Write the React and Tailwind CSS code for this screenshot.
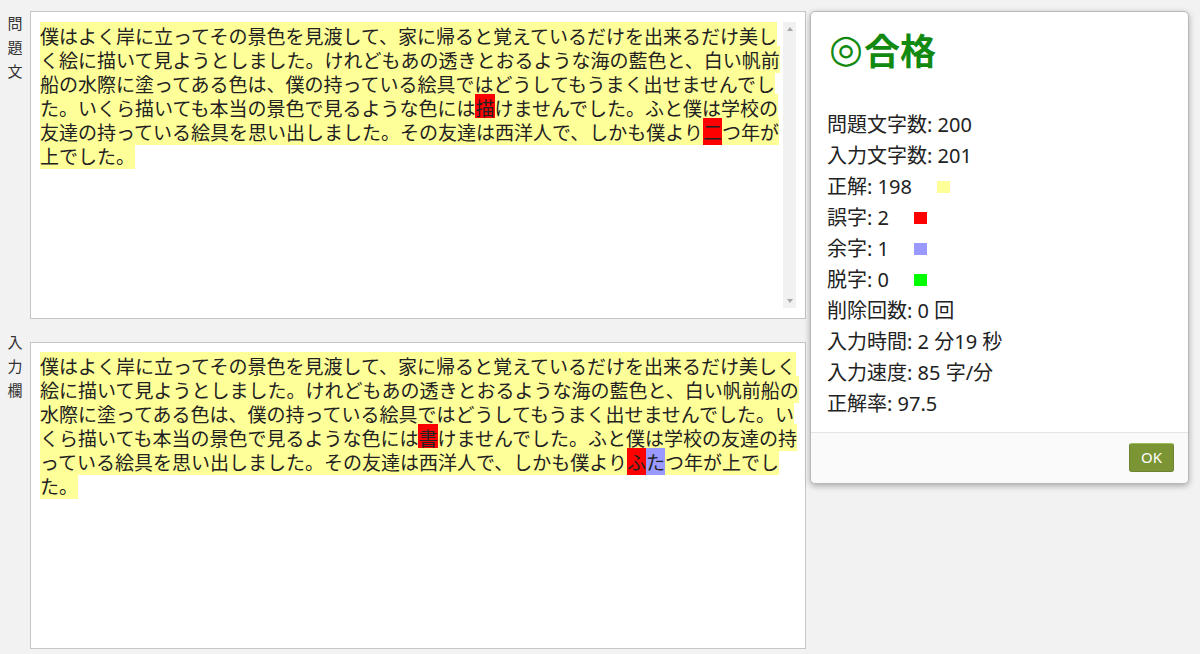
import React from 'react';

const jp = { fontFamily: '"Noto Sans CJK JP", sans-serif' };
const ui = { fontFamily: '"Noto Sans", "Noto Sans CJK JP", sans-serif' };
const mark = { fontFamily: '"DejaVu Sans", "Noto Sans CJK JP", sans-serif' };

// one line = list of segments; a plain string is a correct char run
const questionLines = [
  ['僕はよく岸に立ってその景色を見渡して、家に帰ると覚えているだけを出来るだけ美し'],
  ['く絵に描いて見ようとしました。けれどもあの透きとおるような海の藍色と、白い帆前'],
  ['船の水際に塗ってある色は、僕の持っている絵具ではどうしてもうまく出せませんでし'],
  ['た。いくら描いても本当の景色で見るような色には', { t: '描', k: 'miss' }, 'けませんでした。ふと僕は学校の'],
  ['友達の持っている絵具を思い出しました。その友達は西洋人で、しかも僕より', { t: '二', k: 'miss' }, 'つ年が'],
  ['上でした。'],
];

const inputLines = [
  ['僕はよく岸に立ってその景色を見渡して、家に帰ると覚えているだけを出来るだけ美しく'],
  ['絵に描いて見ようとしました。けれどもあの透きとおるような海の藍色と、白い帆前船の'],
  ['水際に塗ってある色は、僕の持っている絵具ではどうしてもうまく出せませんでした。い'],
  ['くら描いても本当の景色で見るような色には', { t: '書', k: 'miss' }, 'けませんでした。ふと僕は学校の友達の持'],
  ['っている絵具を思い出しました。その友達は西洋人で、しかも僕より', { t: 'ふ', k: 'miss' }, { t: 'た', k: 'extra' }, 'つ年が上でし'],
  ['た。'],
];

const stats = [
  { label: '問題文字数: 200' },
  { label: '入力文字数: 201' },
  { label: '正解: 198', swatch: 'bg-[#ffff99]' },
  { label: '誤字: 2', swatch: 'bg-[#ff0000]' },
  { label: '余字: 1', swatch: 'bg-[#9999ff]' },
  { label: '脱字: 0', swatch: 'bg-[#00ff00]' },
  { label: '削除回数: 0 回' },
  { label: '入力時間: 2 分19 秒' },
  { label: '入力速度: 85 字/分' },
  { label: '正解率: 97.5' },
];

function Segment({ seg }) {
  if (typeof seg === 'string') return <span className="bg-[#ffff99]">{seg}</span>;
  if (seg.k === 'extra') return <span className="bg-[#9999ff]">{seg.t}</span>;
  return <span className="bg-[#ff0000]">{seg.t}</span>;
}

function TextLines({ lines }) {
  return (
    <div className="text-[19px] leading-[24px] text-[#222]" style={jp}>
      {lines.map((line, i) => (
        <div key={i} className="whitespace-nowrap">
          {line.map((seg, j) => (
            <Segment key={j} seg={seg} />
          ))}
        </div>
      ))}
    </div>
  );
}

function SideLabel({ text }) {
  return (
    <div className="flex w-[30px] shrink-0 flex-col items-center text-[15px] leading-[24px] text-[#333]" style={jp}>
      {text.split('').map((c, i) => (
        <span key={i}>{c}</span>
      ))}
    </div>
  );
}

function ScrollTrack() {
  return (
    <div className="flex w-[13px] shrink-0 flex-col items-center justify-between bg-[#f1f1f1] py-[5px]">
      <div className="h-0 w-0 border-x-[3px] border-b-[4px] border-x-transparent border-b-[#a8a8a8]" />
      <div className="h-0 w-0 border-x-[3px] border-t-[4px] border-x-transparent border-t-[#a8a8a8]" />
    </div>
  );
}

export default function App() {
  return (
    <div className="flex h-[654px] w-[1200px] overflow-hidden bg-[#f2f2f2] pt-[11px]">
      {/* left: question + input */}
      <div className="flex w-[806px] shrink-0 flex-col">
        <div className="flex">
          <SideLabel text="問題文" />
          <div className="flex h-[308px] w-[776px] border border-[#c6c6c6] bg-white py-[10px] pl-[9px] pr-[9px]">
            <div className="flex-1 pt-[2px]">
              <TextLines lines={questionLines} />
            </div>
            <ScrollTrack />
          </div>
        </div>

        <div className="mt-[11px] flex">
          <SideLabel text="入力欄" />
          <div className="mt-[12px] h-[307px] w-[776px] border border-[#c6c6c6] bg-white pl-[9px] pt-[11px]">
            <TextLines lines={inputLines} />
          </div>
        </div>
      </div>

      {/* right: result dialog */}
      <div className="ml-[4px] flex h-[473px] w-[379px] flex-col rounded-[5px] border border-[#b8b8b8] bg-white shadow-[0_2px_6px_rgba(0,0,0,0.3)]">
        <div className="flex-1 pl-[16px] pt-[15px]">
          <div className="flex h-[44px] items-center text-[36px] font-bold leading-[44px] text-[#128a12]" style={jp}>
            <span className="ml-[2px] mr-[1px] text-[39px] leading-[44px]" style={mark}>
              ◎
            </span>
            <span>合格</span>
          </div>
          <div className="mt-[38px] text-[20px] leading-[31px] text-[#222]" style={ui}>
            {stats.map((s) => (
              <div key={s.label} className="flex items-center">
                <span>{s.label}</span>
                {s.swatch && <span className={`ml-[25px] inline-block h-[12px] w-[13px] ${s.swatch}`} />}
              </div>
            ))}
          </div>
        </div>
        <div className="flex h-[51px] items-start justify-end rounded-b-[5px] border-t border-[#e4e4e4] bg-[#fafafa] pr-[14px] pt-[10px]">
          <button
            className="h-[29px] w-[45px] rounded-[3px] border border-[#6c8430] border-t-[#9cbd55] bg-[#7b9535] text-[15px] text-white"
            style={ui}
          >
            OK
          </button>
        </div>
      </div>
    </div>
  );
}
